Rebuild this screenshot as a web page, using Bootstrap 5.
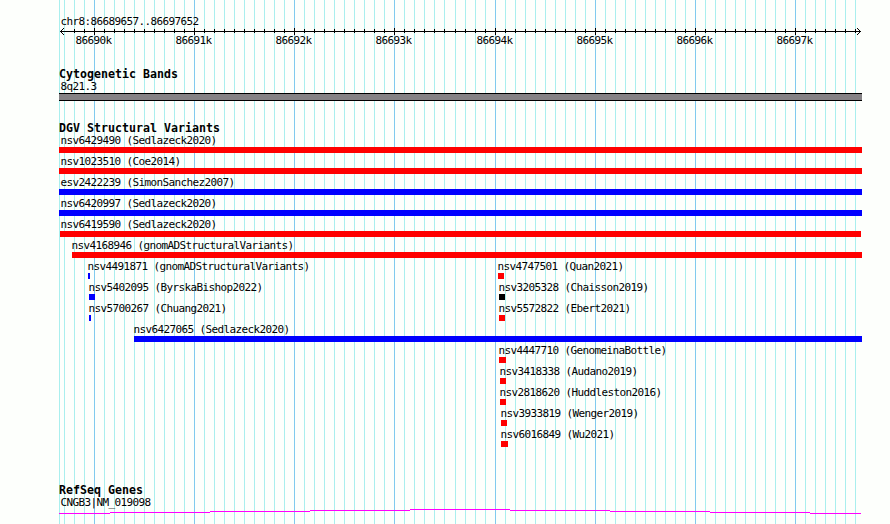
<!DOCTYPE html>
<html lang="en">
<head>
  <meta charset="UTF-8" />
  <meta name="viewport" content="width=device-width, initial-scale=1.0"/>
  <title>chr8:86689657..86697652</title>
  <link href="https://cdn.jsdelivr.net/npm/bootstrap@5.3.0/dist/css/bootstrap.min.css" rel="stylesheet">
  <style>
    body {
      background-color: #fdfffc;
      color: #000;
      font: 11px/13px "DejaVu Sans Mono", monospace;
      letter-spacing: -0.622px;
    }
    .browser-panel { width: 890px; height: 524px; padding-left: 59px; }
    .grid-lines { z-index: 0; }
    .tracks { z-index: 1; width: 803px; padding-top: 15px; }
    .track-text { height: 13px; padding-left: 1.5px; white-space: pre; }
    .track-title {
      height: 12px;
      font-size: 11.6px;
      line-height: 12px;
      font-weight: bold;
      letter-spacing: 0.016px;
      white-space: pre;
    }
    .ruler { height: 7px; }
    .scale-row { height: 13px; margin-top: -1px; padding-left: 0.5px; }
    .scale-row span { width: 0; white-space: pre; }
    .cyto-track { margin-top: 21px; }
    .cyto-band { height: 8px; background: #858285; border: solid #000; border-width: 1px 0; }
    .dgv-track { margin-top: 21px; }
    .feature-row { display: grid; grid-template-columns: 100%; height: 21px; }
    .feature { grid-area: 1 / 1; }
    .feature-name { height: 13px; padding-left: 0.6px; white-space: pre; }
    .feature-bar { height: 6px; }
    .gene-track { margin-top: 35px; }
  </style>
</head>
<body>
  <div class="browser-panel position-relative overflow-hidden">
    <svg id="grid" class="grid-lines position-absolute top-0 start-0" width="890" height="524" shape-rendering="crispEdges"></svg>

    <div class="tracks position-relative">
      <div class="track-text">chr8:86689657..86697652</div>
      <svg id="ruler" class="ruler d-block" width="803" height="7" shape-rendering="crispEdges"></svg>
      <div id="scale" class="scale-row d-flex"></div>

      <div class="cyto-track">
        <div class="track-title">Cytogenetic Bands</div>
        <div class="track-text">8q21.3</div>
        <div class="cyto-band"></div>
      </div>

      <div class="dgv-track">
        <div class="track-title">DGV Structural Variants</div>
        <div id="variants"></div>
      </div>

      <div class="gene-track">
        <div class="track-title">RefSeq Genes</div>
        <div class="track-text">CNGB3|NM_019098</div>
        <svg class="d-block" width="803" height="6" shape-rendering="crispEdges">
          <path fill="#f0f" d="M0 4h51v1H0zM51 3h100v1H51zM151 2h100v1H151zM251 1h100v1H251zM351 0h100v1H351zM451 1h100v1H451zM551 2h100v1H551zM651 3h100v1H651zM751 4h51v1H751z"/>
        </svg>
      </div>
    </div>
  </div>

  <script src="https://cdn.jsdelivr.net/npm/bootstrap@5.3.0/dist/js/bootstrap.bundle.min.js"></script>
  <script>
    const LEFT = 59;

    const lines = [];
    for (let i = 0; i < 80; i++) {
      const x = 64 + i * 10 + (i > 38 ? 1 : 0);
      lines.push({ x: x, major: i % 10 === 3 });
    }

    let grid = `<rect x="${LEFT}" width="1" height="524" fill="#a9efee"/>`;
    let ruler = '<rect x="1" y="3" width="801" height="1"/>';
    let scale = "";
    let kb = 86690;
    let cursor = LEFT;

    lines.forEach(line => {
      grid += `<rect x="${line.x}" width="1" height="524" fill="${line.major ? "#80cbee" : "#a9efee"}"/>`;
      if (line.x > 64) {
        ruler += line.major
          ? `<rect x="${line.x - LEFT}" y="0" width="1" height="7"/>`
          : `<rect x="${line.x - LEFT}" y="1" width="1" height="4"/>`;
      }
      if (line.major) {
        const start = line.x - 19;
        scale += `<span style="margin-left:${start - cursor}px">${kb}k</span>`;
        cursor = start;
        kb++;
      }
    });
    // arrow heads
    ruler += '<path d="M1 3h1v1h-1zM2 2h1v1h-1zM3 1h1v1h-1zM4 0h1v1h-1zM2 4h1v1h-1zM3 5h1v1h-1zM4 6h1v1h-1z"/>';
    ruler += '<path d="M801 3h1v1h-1zM800 2h1v1h-1zM799 1h1v1h-1zM798 0h1v1h-1zM800 4h1v1h-1zM799 5h1v1h-1zM798 6h1v1h-1z"/>';

    document.getElementById("grid").innerHTML = grid;
    document.getElementById("ruler").innerHTML = ruler;
    document.getElementById("scale").innerHTML = scale;

    // [name, start, end, color]
    const rows = [
      [["nsv6429490 (Sedlazeck2020)", 59, 862, "#f00"]],
      [["nsv1023510 (Coe2014)", 59, 862, "#f00"]],
      [["esv2422239 (SimonSanchez2007)", 59, 862, "#00f"]],
      [["nsv6420997 (Sedlazeck2020)", 59, 862, "#00f"]],
      [["nsv6419590 (Sedlazeck2020)", 60, 861, "#f00"]],
      [["nsv4168946 (gnomADStructuralVariants)", 72, 862, "#f00"]],
      [["nsv4491871 (gnomADStructuralVariants)", 88, 90, "#00f"], ["nsv4747501 (Quan2021)", 498, 504, "#f00"]],
      [["nsv5402095 (ByrskaBishop2022)", 89, 95, "#00f"], ["nsv3205328 (Chaisson2019)", 499, 505, "#000"]],
      [["nsv5700267 (Chuang2021)", 89, 91, "#00f"], ["nsv5572822 (Ebert2021)", 499, 505, "#f00"]],
      [["nsv6427065 (Sedlazeck2020)", 134, 862, "#00f"]],
      [["nsv4447710 (GenomeinaBottle)", 499, 506, "#f00"]],
      [["nsv3418338 (Audano2019)", 500, 506, "#f00"]],
      [["nsv2818620 (Huddleston2016)", 500, 506, "#f00"]],
      [["nsv3933819 (Wenger2019)", 501, 507, "#f00"]],
      [["nsv6016849 (Wu2021)", 501, 508, "#f00"]]
    ];

    const variants = document.getElementById("variants");
    rows.forEach(row => {
      const el = document.createElement("div");
      el.className = "feature-row";
      el.innerHTML = row.map(([name, start, end, color]) => {
        const textStart = Math.max(60, start - 1);
        return `
          <div class="feature">
            <div class="feature-name" style="margin-left:${textStart - LEFT}px">${name}</div>
            <div class="feature-bar" style="margin-left:${start - LEFT}px;width:${end - start}px;background:${color}"></div>
          </div>`;
      }).join("");
      variants.appendChild(el);
    });
  </script>
</body>
</html>
